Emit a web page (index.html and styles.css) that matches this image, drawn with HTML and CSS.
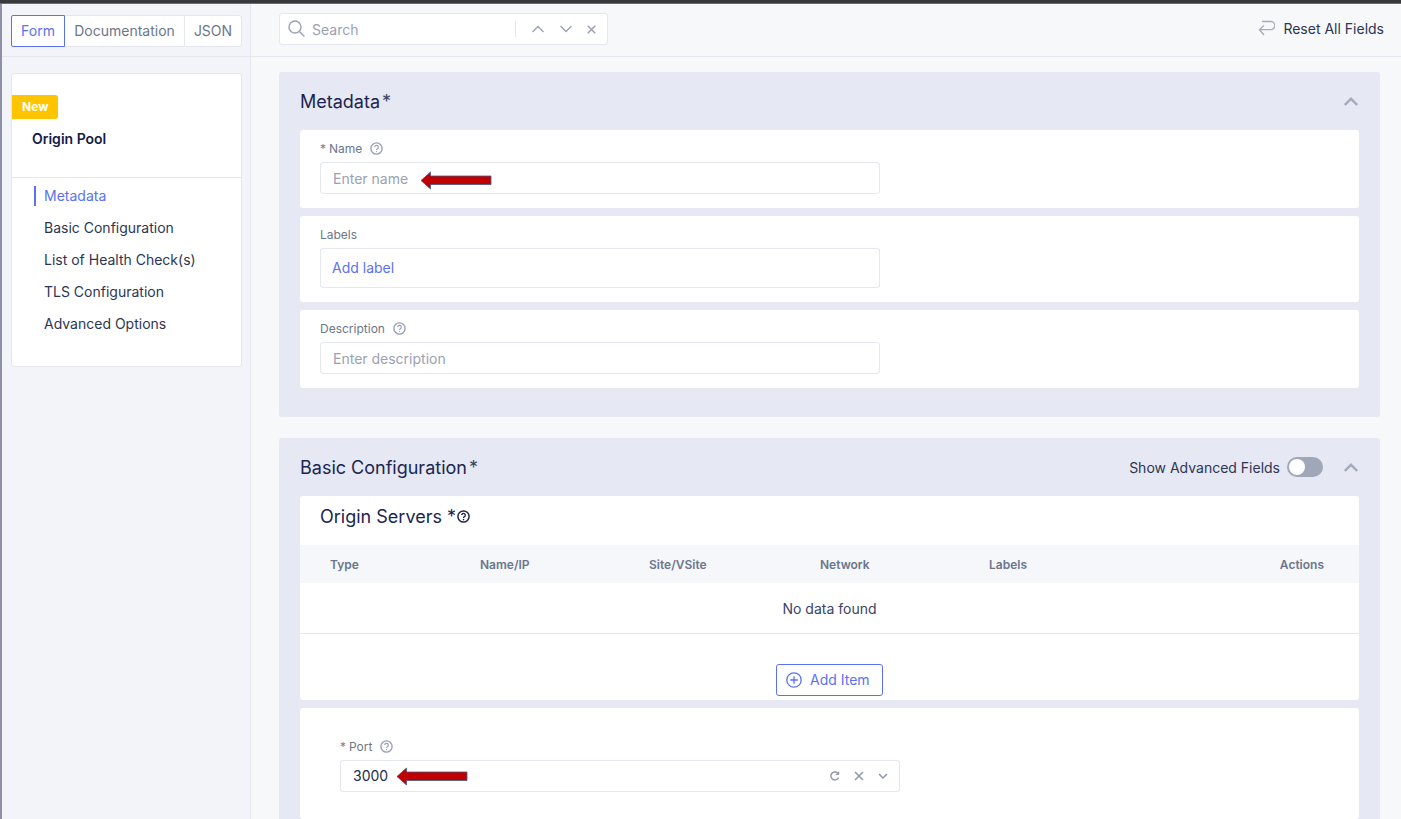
FILE: index.html
```html
<!DOCTYPE html>
<html lang="en">
  <head>
    <title>Origin Pool</title>
    <meta charset="utf-8" />
    <link rel="stylesheet" href="styles.css">
  </head>
  <body>
    <div class="topline"></div>
    <div class="app">
      <aside class="side">
        <div class="side-top">
          <div class="tabs">
            <div class="tab tab-on">Form</div>
            <div class="tab tab-doc">Documentation</div>
            <div class="tab tab-json">JSON</div>
          </div>
        </div>
        <div class="side-card">
          <div class="side-head">
            <div class="badge">New</div>
            <div class="side-title">Origin Pool</div>
          </div>
          <ul class="nav">
            <li class="nav-on">Metadata</li>
            <li>Basic Configuration</li>
            <li>List of Health Check(s)</li>
            <li>TLS Configuration</li>
            <li>Advanced Options</li>
          </ul>
        </div>
      </aside>

      <main class="main">
        <div class="toolbar">
          <div class="search">
            <svg class="search-icon" width="18" height="18" viewBox="0 0 18 18" fill="none" stroke="#9aa1b4" stroke-width="1.4"><circle cx="7" cy="7" r="6"/><path d="M11.4 11.4l5 5"/></svg>
            <span class="search-text">Search</span>
            <span class="search-sep"></span>
            <svg class="search-up" width="12" height="8" viewBox="0 0 12 8" fill="none" stroke="#9aa1b4" stroke-width="1.4"><path d="M.5 7l5.5-5.5L11.5 7"/></svg>
            <svg class="search-down" width="12" height="8" viewBox="0 0 12 8" fill="none" stroke="#9aa1b4" stroke-width="1.4"><path d="M.5 1L6 6.5 11.5 1"/></svg>
            <svg class="search-close" width="9" height="9" viewBox="0 0 9 9" fill="none" stroke="#9aa1b4" stroke-width="1.5"><path d="M.7.7l7.6 7.6M8.3.7L.7 8.3"/></svg>
          </div>
          <div class="reset">
            <svg width="17" height="16" viewBox="0 0 17 16" fill="none" stroke="#a4abbc" stroke-width="1.3"><path d="M4 1.5h8.7a3.4 3.4 0 0 1 0 8.2H1.5"/><path d="M6 5.4L1.4 9.7 6 15"/></svg>
            <span>Reset All Fields</span>
          </div>
        </div>

        <div class="content">
          <section class="section">
            <div class="section-head">
              <h2>Metadata<span class="star">*</span></h2>
              <svg class="collapse" width="14" height="9" viewBox="0 0 14 9" fill="none" stroke="#a4abbc" stroke-width="2.4"><path d="M.8 8L7 1.8 13.2 8"/></svg>
            </div>
            <div class="card card-field">
              <div class="label"><span class="req">*</span> Name <svg class="help" width="13" height="13" viewBox="0 0 13 13"><use href="#q"/></svg></div>
              <div class="input placeholder">Enter name
                <svg class="arrow" width="73" height="19" viewBox="0 0 73 19"><polygon points="1,9.5 10.5,1 10.5,5 71,5 71,13.5 10.5,13.5 10.5,18" fill="#c00000" stroke="#3f5a90" stroke-width="0.8"/></svg>
              </div>
            </div>
            <div class="card card-field">
              <div class="label">Labels</div>
              <div class="input input-tall link">Add label</div>
            </div>
            <div class="card card-field">
              <div class="label">Description <svg class="help" width="13" height="13" viewBox="0 0 13 13"><use href="#q"/></svg></div>
              <div class="input placeholder">Enter description</div>
            </div>
          </section>

          <section class="section">
            <div class="section-head">
              <h2>Basic Configuration<span class="star">*</span></h2>
              <div class="adv">
                <span>Show Advanced Fields</span>
                <span class="switch"><span class="knob"></span></span>
              </div>
              <svg class="collapse" width="14" height="9" viewBox="0 0 14 9" fill="none" stroke="#a4abbc" stroke-width="2.4"><path d="M.8 8L7 1.8 13.2 8"/></svg>
            </div>
            <div class="card card-table">
              <h3>Origin Servers <span class="h3-star">*</span><svg class="help-dark" width="13" height="13" viewBox="0 0 13 13"><use href="#q2"/></svg></h3>
              <div class="thead">
                <span>Type</span>
                <span>Name/IP</span>
                <span>Site/VSite</span>
                <span>Network</span>
                <span>Labels</span>
                <span class="th-actions">Actions</span>
              </div>
              <div class="empty">No data found</div>
              <div class="add-row">
                <div class="add-btn">
                  <svg width="16" height="16" viewBox="0 0 16 16" fill="none" stroke="#5a71f5" stroke-width="1.3"><circle cx="8" cy="8" r="7.2"/><path d="M8 4.2v7.6M4.2 8h7.6"/></svg>
                  <span class="add-text">Add Item</span>
                </div>
              </div>
            </div>
            <div class="card card-port">
              <div class="label"><span class="req">*</span> Port <svg class="help" width="13" height="13" viewBox="0 0 13 13"><use href="#q"/></svg></div>
              <div class="input input-select">
                <span class="value">3000</span>
                <svg class="arrow arrow-port" width="73" height="19" viewBox="0 0 73 19"><polygon points="1,9.5 10.5,1 10.5,5 71,5 71,13.5 10.5,13.5 10.5,18" fill="#c00000" stroke="#3f5a90" stroke-width="0.8"/></svg>
                <svg class="sel-icon" width="10" height="10" viewBox="0 0 10 10" fill="none" stroke="#8d96ab" stroke-width="1.4"><path d="M8.6 6.4A4 4 0 1 1 7.8 2.2"/><path d="M8.8 0.6v3H5.8" fill="#8d96ab" stroke-width="0.8"/></svg>
                <svg class="sel-icon" width="10" height="10" viewBox="0 0 10 10" fill="none" stroke="#8d96ab" stroke-width="1.5"><path d="M1 1l8 8M9 1l-8 8"/></svg>
                <svg class="sel-icon" width="10" height="10" viewBox="0 0 10 10" fill="none" stroke="#8d96ab" stroke-width="1.5"><path d="M1 3l4 4 4-4"/></svg>
              </div>
            </div>
          </section>
        </div>
      </main>
    </div>

    <!-- shared help icons -->
    <svg class="defs" width="0" height="0">
      <symbol id="q" viewBox="0 0 13 13">
        <circle cx="6.5" cy="6.5" r="5.6" fill="none" stroke="#98a1b6" stroke-width="1.4"/>
        <path d="M4.7 5.1a1.8 1.8 0 1 1 2.7 1.6c-.6.3-.9.6-.9 1.2" fill="none" stroke="#98a1b6" stroke-width="1.2"/>
        <circle cx="6.5" cy="9.6" r=".7" fill="#98a1b6"/>
      </symbol>
      <symbol id="q2" viewBox="0 0 13 13">
        <circle cx="6.5" cy="6.5" r="5.6" fill="none" stroke="#1f2a4d" stroke-width="1.5"/>
        <path d="M4.7 5.1a1.8 1.8 0 1 1 2.7 1.6c-.6.3-.9.6-.9 1.2" fill="none" stroke="#1f2a4d" stroke-width="1.3"/>
        <circle cx="6.5" cy="9.6" r=".8" fill="#1f2a4d"/>
      </symbol>
    </svg>
  </body>
</html>
```

FILE: styles.css
```css
* {
  box-sizing: border-box;
}
html,
body {
  margin: 0;
  height: 819px;
  overflow: hidden;
}
body {
  font-family: Inter, "Liberation Sans", sans-serif;
  font-size: 14px;
  color: #1f2a4d;
  background-color: #f7f8fa;
}
.defs {
  position: absolute;
}
.topline {
  height: 4px;
  background-color: #38383d;
  border-bottom: 1px solid #6b6b70;
}
.app {
  display: flex;
  height: 815px;
  overflow: hidden;
  border-left: 2px solid #8d90a8;
}

/* left column */
.side {
  width: 249px;
  flex: none;
  background-color: #f3f4f9;
  border-right: 1px solid #e4e6f0;
}
.side-top {
  height: 53px;
  padding: 11px 8px 0 9px;
  border-bottom: 1px solid #e4e6f0;
}
.tabs {
  display: flex;
  width: 231px;
  height: 32px;
  background-color: #fff;
  border-radius: 3px;
}
.tab {
  display: flex;
  align-items: center;
  justify-content: center;
  color: #6b768c;
  border: 1px solid #e4e6f0;
  border-left: 0;
  line-height: 30px;
}
.tab-on {
  width: 54px;
  color: #5a71f5;
  border: 1px solid #5a71f5;
  border-radius: 2px 0 0 2px;
}
.tab-doc {
  width: 120px;
}
.tab-json {
  width: 57px;
  border-radius: 0 3px 3px 0;
}
.side-card {
  width: 231px;
  height: 294px;
  margin: 16px 0 0 9px;
  background-color: #fff;
  border: 1px solid #e4e6f0;
  border-radius: 3px;
}
.side-head {
  height: 104px;
  padding-top: 21px;
  border-bottom: 1px solid #e4e6f0;
}
.badge {
  width: 46px;
  height: 24px;
  line-height: 24px;
  padding-left: 10px;
  font-size: 12px;
  font-weight: 700;
  color: #fff;
  background-color: #ffc400;
  border-radius: 0 3px 3px 0;
}
.side-title {
  margin: 10px 0 0 20px;
  line-height: 20px;
  font-weight: 600;
  color: #131c44;
}
.nav {
  list-style: none;
  margin: 0;
  padding: 2px 0 0 22px;
}
.nav li {
  height: 32px;
  padding-left: 10px;
  line-height: 32px;
  color: #2c3654;
}
.nav .nav-on {
  color: #5a71f5;
  position: relative;
}
.nav-on::before {
  content: "";
  position: absolute;
  left: 0;
  top: 6px;
  width: 2px;
  height: 20px;
  background-color: #5a71f5;
}

/* right column */
.main {
  flex: 1;
  min-width: 0;
}
.toolbar {
  display: flex;
  align-items: flex-start;
  justify-content: space-between;
  height: 53px;
  padding: 9px 17px 0 28px;
  border-bottom: 1px solid #e4e6f0;
}
.search {
  display: flex;
  align-items: center;
  width: 329px;
  height: 32px;
  padding: 0 11px 0 8px;
  background-color: #fff;
  border: 1px solid #e4e6f0;
  border-radius: 3px;
}
.search-text {
  flex: 1;
  margin-left: 6px;
  color: #9aa1b4;
}
.search-sep {
  width: 1px;
  height: 16px;
  margin-right: 16px;
  background-color: #e4e6f0;
}
.search-down {
  margin-left: 16px;
}
.search-close {
  margin-left: 15px;
}
.reset {
  display: flex;
  align-items: center;
  gap: 8px;
  height: 30px;
  color: #2c3654;
}
.content {
  padding: 15px 21px 0 28px;
}
.section {
  width: 1101px;
  padding: 0 21px 21px;
  margin-bottom: 21px;
  background-color: #e6e8f3;
  border-radius: 3px;
}
.section-head {
  display: flex;
  align-items: center;
  height: 58px;
}
.section-head h2 {
  flex: 1;
  margin: 0;
  font-size: 18px;
  font-weight: 400;
  color: #1a2550;
}
.star {
  margin-left: 2px;
  color: #3a4466;
}
.collapse {
  margin-right: 1px;
}
.adv {
  display: flex;
  align-items: center;
  margin-right: 21px;
  color: #2c3654;
}
.switch {
  width: 36px;
  height: 20px;
  margin-left: 7px;
  padding: 2px;
  background-color: #a0a7b8;
  border-radius: 10px;
}
.knob {
  display: block;
  width: 16px;
  height: 16px;
  background-color: #fff;
  border-radius: 50%;
}
.card {
  margin-bottom: 8px;
  background-color: #fff;
  border-radius: 3px;
}
.card-field {
  padding: 10px 20px 14px;
}
.label {
  display: flex;
  align-items: center;
  gap: 3px;
  height: 17px;
  margin-bottom: 5px;
  font-size: 12px;
  color: #6b768c;
}
.req {
  color: #7f7a88;
}
.help {
  margin-left: 5px;
}
.input {
  position: relative;
  width: 560px;
  height: 32px;
  padding: 0 12px;
  line-height: 32px;
  background-color: #fff;
  border: 1px solid #e4e6f0;
  border-radius: 3px;
}
.placeholder {
  color: #9aa1b4;
}
.input-tall {
  height: 40px;
  padding: 0 11px;
  line-height: 38px;
}
.link {
  color: #5a71f5;
}
/* red arrows sit on top of the inputs */
.arrow {
  position: absolute;
  left: 99px;
  top: 8px;
}
.arrow-port {
  left: 55px;
  top: 6px;
}
.card-table {
  height: 204px;
  padding-top: 8px;
}
.card-table h3 {
  display: flex;
  align-items: center;
  height: 24px;
  margin: 0 0 17px 20px;
  font-size: 18px;
  font-weight: 400;
  color: #1a2550;
}
.h3-star {
  margin-left: 5px;
}
.help-dark {
  margin-left: 1px;
}
.thead {
  display: grid;
  grid-template-columns: 150px 169px 171px 169px 1fr auto;
  align-items: center;
  height: 38px;
  padding: 0 35px 0 30px;
  font-size: 12px;
  font-weight: 600;
  color: #6b768c;
  background-color: #f6f7fa;
}
.empty {
  height: 51px;
  line-height: 52px;
  text-align: center;
  color: #3a4466;
  border-bottom: 1px solid #e6e8f0;
}
.add-row {
  display: flex;
  justify-content: center;
  padding-top: 30px;
}
.add-btn {
  display: flex;
  align-items: center;
  gap: 8px;
  width: 107px;
  height: 32px;
  padding-left: 9px;
  color: #5a71f5;
  border: 1px solid #5a71f5;
  border-radius: 3px;
}
.add-text {
  margin-bottom: 2px;
}
.card-port {
  height: 111px;
  padding: 30px 40px 0;
  margin-bottom: 0;
}
.input-select {
  display: flex;
  align-items: center;
  gap: 14px;
  padding: 0 11px 0 12px;
}
.value {
  flex: 1;
  color: #1f2a4d;
}
```
